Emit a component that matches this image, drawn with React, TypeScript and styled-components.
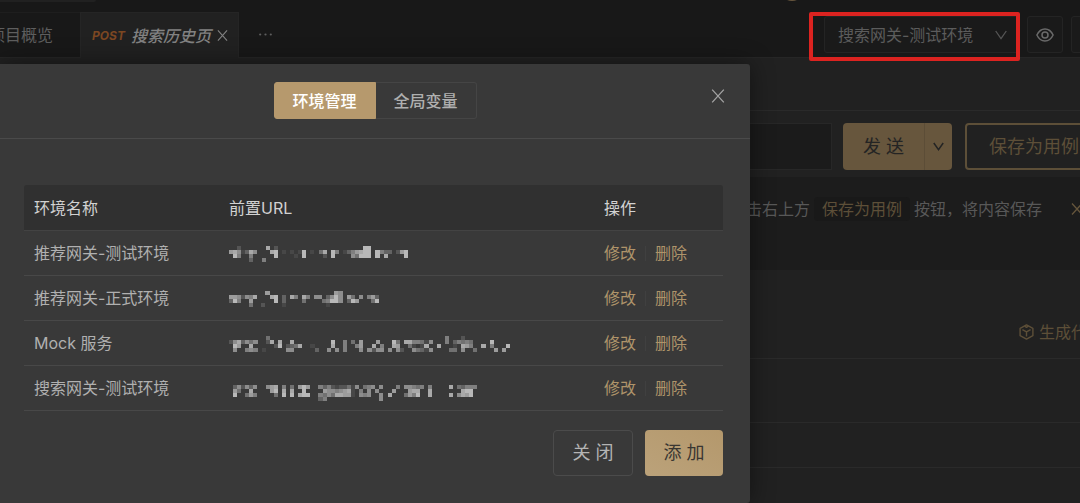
import React from "react";
import styled, { createGlobalStyle } from "styled-components";

const GlobalStyle = createGlobalStyle`
  *, *::before, *::after { box-sizing: border-box; }
  body {
    margin: 0;
    background: #212121;
    color: #6c6c6c;
    font: 16px/24px Inter, "Noto Sans CJK SC", sans-serif;
  }
  button, input, select { font: inherit; color: inherit; }
  button { cursor: pointer; }
`;

const Page = styled.div`
  position: relative;
  min-height: 100vh;
  overflow: hidden;
`;

/* ---------- workspace behind the dialog ---------- */

const TopBar = styled.header`
  height: 12px;
  background: #181818;
  display: flex;
  justify-content: space-between;
`;

const TopPanel = styled.div`
  width: 96px;
  height: 2px;
  background: #212121;
  border-radius: 0 0 2px 0;
`;

const AvatarEdge = styled.svg`
  display: block;
  width: 14px;
  height: 2px;
  margin-right: 281px;
`;

const TabBar = styled.nav`
  display: flex;
  align-items: stretch;
  height: 46px;
  background: #181818;
  border-bottom: 1px solid #262626;
`;

const Tab = styled.button<{ $active?: boolean }>`
  display: flex;
  align-items: center;
  justify-content: flex-end;
  flex: none;
  gap: 6px;
  width: ${(p) => (p.$active ? 159 : 80)}px;
  padding: 0 ${(p) => (p.$active ? 10 : 27)}px 0 0;
  margin-bottom: ${(p) => (p.$active ? -1 : 0)}px;
  border: 1px solid ${(p) => (p.$active ? "#252525" : "#1e1e1e")};
  border-width: 1px ${(p) => (p.$active ? 1 : 0)}px 0;
  background: ${(p) => (p.$active ? "#212121" : "#181818")};
  color: ${(p) => (p.$active ? "#828282" : "#5e5e5e")};
  white-space: nowrap;
`;

const Method = styled.span`
  font-size: 12px;
  font-weight: 700;
  font-style: italic;
  color: #7c4722;
`;

const TabName = styled.span`
  font-weight: 500;
  font-style: italic;
`;

const MoreTabs = styled.button`
  padding: 0 20px;
  border: 0;
  background: none;
  color: #5e5e5e;
  display: flex;
  align-items: center;
`;

const EnvTools = styled.div`
  display: flex;
  gap: 8px;
  flex: none;
  width: 256px;
  height: 37px;
  margin: 4px 0 0 auto;
`;

const SelectWrap = styled.label`
  position: relative;
  flex: none;
  width: 195px;
`;

const EnvSelect = styled.select`
  width: 100%;
  height: 37px;
  padding: 0 40px 0 13px;
  appearance: none;
  border: 1px solid #242424;
  border-radius: 3px;
  background: #1a1a1a;
  color: #5c5c5c;
`;

const SelectArrow = styled.svg`
  position: absolute;
  right: 12px;
  top: 14px;
  pointer-events: none;
`;

const Highlight = styled.span`
  position: absolute;
  inset: -4px -1px -8px -15px;
  border: 4px solid #dc2320;
  border-radius: 2px;
  pointer-events: none;
`;

const ToolButton = styled.button`
  display: flex;
  align-items: center;
  justify-content: center;
  flex: none;
  width: 36px;
  padding: 0;
  border: 1px solid #242424;
  border-radius: 3px;
  background: #1a1a1a;
  color: #6a6a6a;
`;

const Strip = styled.div<{ $h: number }>`
  height: ${(p) => p.$h}px;
  border-bottom: 1px solid #2a2a2a;
`;

const RequestRow = styled.div`
  display: flex;
  height: 66px;
  padding: 12px 0 7px;
`;

const UrlInput = styled.input`
  flex: 1;
  min-width: 0;
  border: 1px solid #272727;
  background: #1b1b1b;
`;

const RequestActions = styled.div`
  display: flex;
  flex: none;
  gap: 13px;
  width: 248px;
  padding-left: 11px;
`;

const SendGroup = styled.div`
  display: flex;
  flex: none;
  width: 109px;
  height: 47px;
  border-radius: 4px;
  overflow: hidden;
  background: #67563d;
`;

const SendButton = styled.button<{ $split?: boolean }>`
  display: flex;
  align-items: center;
  justify-content: center;
  width: ${(p) => (p.$split ? 28 : 81)}px;
  padding: 0;
  border: 0;
  border-left: ${(p) => (p.$split ? "1px solid #5c4d37" : "0")};
  background: none;
  color: #242424;
  font-size: 18px;
`;

const SaveButton = styled.button`
  flex: none;
  width: 138px;
  height: 47px;
  border: 2px solid #5d4f38;
  border-radius: 4px;
  background: transparent;
  color: #5d4f38;
  font-size: 18px;
  white-space: nowrap;
`;

const Tip = styled.section`
  display: flex;
  justify-content: flex-end;
  height: 93px;
  padding: 20px 0;
  background: #1c1c1c;
  color: #585858;
  white-space: nowrap;
`;

const TipAction = styled.span`
  height: 24px;
  margin: 0 4px;
  padding: 0 8px;
  border-radius: 4px;
  background: #191919;
  color: #5d4f38;
`;

const TipClose = styled.button`
  width: 38px;
  padding: 0 0 0 29px;
  height: 24px;
  border: 0;
  background: none;
  color: #66563c;
  overflow: hidden;
  display: flex;
  align-items: center;
`;

const CodeRow = styled.div`
  display: flex;
  justify-content: flex-end;
  height: 89px;
  padding-top: 50px;
  border-bottom: 1px solid #2a2a2a;
`;

const CodeButton = styled.button`
  display: flex;
  align-items: center;
  gap: 5px;
  width: 61px;
  height: 24px;
  padding: 0;
  border: 0;
  background: none;
  color: #5d4f38;
  white-space: nowrap;
  overflow: hidden;
  svg { flex: none; }
`;

/* ---------- dialog ---------- */

const Dialog = styled.section`
  position: absolute;
  top: 64px;
  left: 0;
  width: calc(100% - 330px);
  background: #393939;
  border-radius: 0 3px 3px 0;
  box-shadow: 0 0 24px rgba(0, 0, 0, 0.45);
  color: #b0b0b0;
`;

const DialogHeader = styled.header`
  position: relative;
  display: flex;
  justify-content: center;
  padding: 18px 0 19px;
  border-bottom: 1px solid #4a4a4a;
`;

const Segment = styled.button<{ $active?: boolean }>`
  width: ${(p) => (p.$active ? 102 : 101)}px;
  height: 37px;
  padding: 0;
  border: 1px solid ${(p) => (p.$active ? "#b6996d" : "#454545")};
  border-left-width: ${(p) => (p.$active ? 1 : 0)}px;
  border-radius: ${(p) => (p.$active ? "3px 0 0 3px" : "0 3px 3px 0")};
  background: ${(p) => (p.$active ? "#b6996d" : "transparent")};
  color: ${(p) => (p.$active ? "#ffffff" : "#b0b0b0")};
  font-weight: 500;
`;

const CloseButton = styled.button`
  position: absolute;
  top: 20px;
  right: 20px;
  display: flex;
  align-items: center;
  justify-content: center;
  width: 24px;
  height: 24px;
  padding: 0;
  border: 0;
  background: none;
  color: #a4a4a4;
`;

const DialogBody = styled.div`
  padding: 46px 27px 27px 24px;
`;

const EnvTable = styled.table`
  width: 100%;
  table-layout: fixed;
  border-collapse: separate;
  border-spacing: 0;
`;

const Th = styled.th<{ $w?: number }>`
  width: ${(p) => (p.$w ? `${p.$w}px` : "auto")};
  height: 46px;
  padding: 0 10px;
  background: #303030;
  border-bottom: 1px solid #434343;
  color: #d2d2d2;
  font-weight: 400;
  text-align: left;
  &:first-child { border-top-left-radius: 3px; }
  &:last-child { border-top-right-radius: 3px; }
`;

const Td = styled.td`
  height: 45px;
  padding: 0 10px;
  border-bottom: 1px solid #484848;
  white-space: nowrap;
`;

const MaskedUrl = styled.svg`
  display: block;
  height: 20px;
  margin-top: 5px;
`;

const RowActions = styled.div`
  display: flex;
  align-items: center;
  gap: 9px;
`;

const LinkButton = styled.button`
  padding: 0;
  border: 0;
  background: none;
  color: #af946a;
`;

const Divider = styled.span`
  width: 1px;
  height: 15px;
  background: #404040;
`;

const DialogFooter = styled.footer`
  display: flex;
  justify-content: flex-end;
  gap: 12px;
  margin-top: 19px;
`;

const FooterButton = styled.button<{ $primary?: boolean }>`
  width: ${(p) => (p.$primary ? 78 : 80)}px;
  height: 46px;
  padding: 0;
  border: ${(p) => (p.$primary ? "0" : "1px solid #4b4b4b")};
  border-radius: 4px;
  background: ${(p) => (p.$primary ? "linear-gradient(30deg, #bba27a, #b4986c)" : "transparent")};
  color: ${(p) => (p.$primary ? "#393632" : "#b4b4b4")};
  font-size: 18px;
`;

/* ---------- icons ---------- */

const CrossIcon = styled.svg`
  flex: none;
`;

const Cross = ({ size, stroke = 1.3 }: { size: number; stroke?: number }) => (
  <CrossIcon width={size} height={size} viewBox="0 0 12 12" fill="none" stroke="currentColor" strokeWidth={stroke} aria-hidden="true">
    <path d="M1 .5 11 11.5M11 .5 1 11.5" />
  </CrossIcon>
);

/* Every word is one column of the mosaic, read from top to bottom; a digit is the cell's brightness. */
const Mosaic = ({ columns }: { columns: string }) => {
  const cols = columns.split(" ");
  return (
    <MaskedUrl
      width={Math.round((cols.length * 61) / 15)}
      viewBox={`0 0 ${cols.length} 5`}
      preserveAspectRatio="none"
      shapeRendering="crispEdges"
      role="img"
      aria-label="URL"
    >
      {cols.flatMap((col, x) =>
        col.split("").map((level, y) =>
          level === "0" ? null : (
            <rect key={`${x}-${y}`} x={x} y={y} width="1" height="1" fill="#c6c6c6" opacity={Number(level) / 10} />
          )
        )
      )}
    </MaskedUrl>
  );
};

const environments = [
  {
    name: "推荐网关-测试环境",
    url: "07 089 265 01 03 0853 06 0 0005 8 08 299 0 01 0 01 001 01 099 0 01 0 04 082 0 099 05 0 01 03 056 074 089 999 999 0 099 05 038 03 0 02 07 099",
  },
  {
    name: "推荐网关-正式环境",
    url: "073 079 065 02 06 0574 08 0 0002 7 08 099 0 0331 0 08 05 0 084 05 0 06 06 004 0351 069 799 666 0 073 049 007 06 0 05 074 039",
  },
  {
    name: "Mock 服务",
    url: "02 0696 087 03 0605 0486 0605 0 0001 42 08 002 089 0 0026 0836 004 008 0 0 001 0003 0 0 0006 098 0006 0 0555 0 04 005 0776 0 0006 0082 0706 0056 0 0006 098 0476 0002 08 084 0516 0504 0413 0181 0606 0 008 0 55 0004 0314 05 2486 057 045 0004 0 008 0 095 0007 0 0007 009",
  },
  {
    name: "搜索网关-测试环境",
    url: "0 0379 064 02 0604 0387 0605 0 0 06 077 0894 0 0589 0 0489 0 0708 0999 0709 0 0 05053 03745 0566 0264 0158 0268 0277 0487 0111 06 0056 0405 0566 06 006 06066 0 0008 007 05 0 0604 0677 0585 0489 05 0 0588 0 0 0 0 0808 0 0406 0388 0597 0599 05",
  },
];

export default function App() {
  return (
    <Page>
      <GlobalStyle />
      <TopBar>
        <TopPanel />
        <AvatarEdge viewBox="0 0 14 2" aria-hidden="true">
          <circle cx="7" cy="-11" r="12" fill="#67563d" />
        </AvatarEdge>
      </TopBar>
      <TabBar>
        <Tab>项目概览</Tab>
        <Tab $active>
          <Method>POST</Method>
          <TabName>搜索历史页</TabName>
          <Cross size={11} stroke={1.2} />
        </Tab>
        <MoreTabs aria-label="更多">
          <svg width="13" height="3" viewBox="0 0 13 3" fill="currentColor" aria-hidden="true">
            <circle cx="1.2" cy="1.5" r="1.1" />
            <circle cx="6.5" cy="1.5" r="1.1" />
            <circle cx="11.8" cy="1.5" r="1.1" />
          </svg>
        </MoreTabs>
        <EnvTools>
          <SelectWrap>
            <EnvSelect aria-label="环境" defaultValue="搜索网关-测试环境">
              {environments.map((env) => (
                <option key={env.name}>{env.name}</option>
              ))}
            </EnvSelect>
            <SelectArrow width="12" height="10" viewBox="0 0 12 10" fill="none" stroke="#555" strokeWidth="1.3" aria-hidden="true">
              <path d="M.7 1 6 8.6 11.3 1" />
            </SelectArrow>
            <Highlight />
          </SelectWrap>
          <ToolButton aria-label="查看环境">
            <svg width="18" height="14" viewBox="0 0 18 14" fill="none" stroke="currentColor" strokeWidth="1.5" aria-hidden="true">
              <path d="M.9 7C2.8 3 5.5 1 9 1s6.200 2 8.100 6c-1.900 4-4.600 6-8.100 6S2.800 11 .9 7Z" />
              <circle cx="9" cy="7" r="3" />
            </svg>
          </ToolButton>
          <ToolButton aria-label="设置">
            <svg width="18" height="14" viewBox="0 0 18 14" fill="none" stroke="currentColor" strokeWidth="1.5" aria-hidden="true">
              <path d="M0 3h18M0 11h18" />
            </svg>
          </ToolButton>
        </EnvTools>
      </TabBar>

      <Strip $h={53} />
      <RequestRow>
        <UrlInput aria-label="URL" />
        <RequestActions>
          <SendGroup>
            <SendButton>发 送</SendButton>
            <SendButton $split aria-label="更多发送方式">
              <svg width="11" height="9" viewBox="0 0 11 9" fill="none" stroke="currentColor" strokeWidth="1.5" aria-hidden="true">
                <path d="M.8 1 5.500 7.600 10.200 1" />
              </svg>
            </SendButton>
          </SendGroup>
          <SaveButton>保存为用例</SaveButton>
        </RequestActions>
      </RequestRow>
      <Tip>
        <span>击右上方</span>
        <TipAction>保存为用例</TipAction>
        <span>按钮，将内容保存</span>
        <TipClose aria-label="关闭提示">
          <Cross size={12} />
        </TipClose>
      </Tip>
      <CodeRow>
        <CodeButton>
          <svg width="15" height="16" viewBox="0 0 15 16" fill="none" stroke="currentColor" strokeWidth="1.4" strokeLinejoin="round" aria-hidden="true">
            <path d="M7.500.9 13.900 4.300v7.400L7.500 15.100 1.100 11.700V4.300Z" />
            <path d="M3.400 5.700 7.500 7.900l4.100-2.200M7.500 7.900v4.700" />
            <path d="M5.600 2.200 7.500 3.300l1.900-1.100" />
          </svg>
          生成代码
        </CodeButton>
      </CodeRow>
      <Strip $h={64} />
      <Strip $h={45} />

      <Dialog role="dialog" aria-label="环境管理">
        <DialogHeader>
          <Segment $active>环境管理</Segment>
          <Segment>全局变量</Segment>
          <CloseButton aria-label="关闭">
            <Cross size={14} stroke={1.1} />
          </CloseButton>
        </DialogHeader>
        <DialogBody>
          <EnvTable>
            <thead>
              <tr>
                <Th $w={195}>环境名称</Th>
                <Th>前置URL</Th>
                <Th $w={129}>操作</Th>
              </tr>
            </thead>
            <tbody>
              {environments.map((env) => (
                <tr key={env.name}>
                  <Td>{env.name}</Td>
                  <Td>
                    <Mosaic columns={env.url} />
                  </Td>
                  <Td>
                    <RowActions>
                      <LinkButton>修改</LinkButton>
                      <Divider />
                      <LinkButton>删除</LinkButton>
                    </RowActions>
                  </Td>
                </tr>
              ))}
            </tbody>
          </EnvTable>
          <DialogFooter>
            <FooterButton>关 闭</FooterButton>
            <FooterButton $primary>添 加</FooterButton>
          </DialogFooter>
        </DialogBody>
      </Dialog>
    </Page>
  );
}
